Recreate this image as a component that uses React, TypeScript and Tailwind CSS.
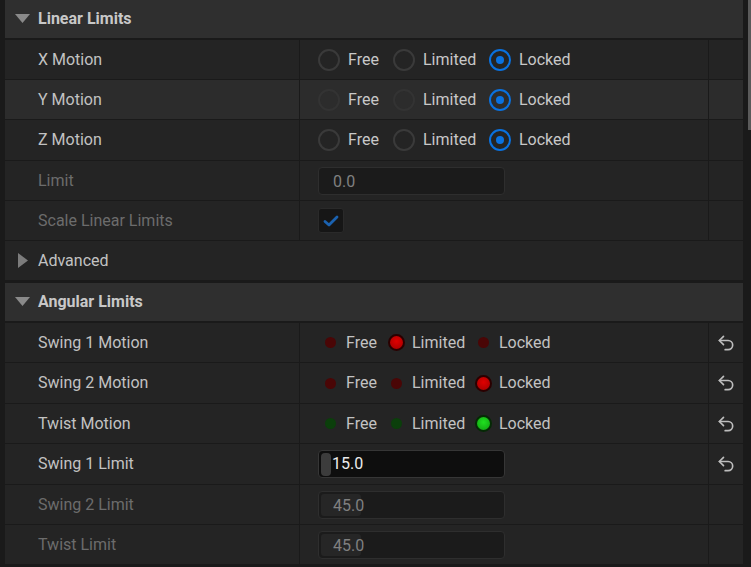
import React from "react";

const Undo = () => (
  <svg width="20" height="20" viewBox="0 0 24 24" fill="none" stroke="#bdbdbd" strokeWidth="2" strokeLinecap="round" strokeLinejoin="round">
    <path d="M9 14 4 9l5-5" />
    <path d="M4 9h10.5a5.5 5.5 0 0 1 5.5 5.5a5.5 5.5 0 0 1-5.5 5.5H11" />
  </svg>
);

const DownTri = () => (
  <svg width="15" height="9" viewBox="0 0 15 9"><path d="M0 0h15L7.5 9z" fill="#8a8a8a" /></svg>
);
const RightTri = () => (
  <svg width="10" height="15" viewBox="0 0 10 15"><path d="M0 0l10 7.5L0 15z" fill="#7c7c7c" /></svg>
);

function Row({
  label,
  dim,
  hl,
  tall,
  children,
  reset,
}: {
  label: string;
  dim?: boolean;
  hl?: boolean;
  tall?: boolean;
  children?: React.ReactNode;
  reset?: boolean;
}) {
  return (
    <div
      className={`flex ${tall ? "h-[41px]" : "h-[40px]"} border-b border-[#1a1a1a] ${hl ? "bg-[#2c2c2c]" : "bg-[#242424]"}`}
    >
      <div
        className={`w-[295px] shrink-0 border-r border-[#1a1a1a] pl-[33px] flex items-center text-[16px] ${dim ? "text-[#6c6c6c]" : "text-[#c2c2c2]"}`}
      >
        {label}
      </div>
      <div className="w-[409px] shrink-0 border-r border-[#1a1a1a] flex items-center pl-[18px]">{children}</div>
      <div className="w-[34px] shrink-0 flex items-center justify-center">{reset ? <Undo /> : null}</div>
    </div>
  );
}

function Header({ label }: { label: string }) {
  return (
    <div className="flex items-center h-[40px] border-b-2 border-[#1a1a1a] bg-[#2f2f2f]">
      <div className="w-[33px] flex justify-center pl-[2px] pb-[1px]">
        <DownTri />
      </div>
      <span className="text-[16px] font-bold text-[#c8c8c8]">{label}</span>
    </div>
  );
}

function Radio({ on, dim }: { on?: boolean; dim?: boolean }) {
  if (on)
    return (
      <div className="w-[22px] h-[22px] rounded-full border-2 border-[#0a72e0] flex items-center justify-center">
        <div className="w-[8px] h-[8px] rounded-full bg-[#0a72e0]" />
      </div>
    );
  return <div className={`w-[22px] h-[22px] rounded-full border-2 ${dim ? "border-[#333333]" : "border-[#3a3a3a]"}`} />;
}

function Motion({ hl }: { hl?: boolean }) {
  return (
    <div className="flex items-center text-[16px] text-[#c8c8c8]">
      <div className="w-[75px] flex items-center gap-[8px]">
        <Radio dim={hl} />
        <span>Free</span>
      </div>
      <div className="w-[96px] flex items-center gap-[8px]">
        <Radio dim={hl} />
        <span>Limited</span>
      </div>
      <div className="flex items-center gap-[8px]">
        <Radio on />
        <span>Locked</span>
      </div>
    </div>
  );
}

function Dot({ color, big }: { color: "r" | "g"; big?: boolean }) {
  if (big) {
    return (
      <div className="w-[22px] h-[22px] flex items-center justify-center">
        <div
          className={`w-[17px] h-[17px] rounded-full border-2 ${
            color === "r"
              ? "border-[#2a0000] bg-[radial-gradient(circle_at_50%_40%,#e00000,#a00000)]"
              : "border-[#052a05] bg-[radial-gradient(circle_at_50%_40%,#20e020,#10a010)]"
          }`}
        />
      </div>
    );
  }
  return (
    <div className="w-[22px] h-[22px] flex items-center justify-center">
      <div className={`w-[11px] h-[11px] rounded-full ${color === "r" ? "bg-[#4a0606]" : "bg-[#0b3f0b]"}`} />
    </div>
  );
}

function ColorMotion({ color, sel }: { color: "r" | "g"; sel: number }) {
  return (
    <div className="flex items-center text-[16px] text-[#c2c2c2] ml-[1px]">
      <div className="w-[66px] flex items-center gap-[5px]">
        <Dot color={color} big={sel === 0} />
        <span>Free</span>
      </div>
      <div className="w-[87px] flex items-center gap-[5px]">
        <Dot color={color} big={sel === 1} />
        <span>Limited</span>
      </div>
      <div className="flex items-center gap-[5px]">
        <Dot color={color} big={sel === 2} />
        <span>Locked</span>
      </div>
    </div>
  );
}

function NumInput({ value, fill, active }: { value: string; fill?: boolean; active?: boolean }) {
  if (active)
    return (
      <div className="w-[187px] h-[28px] rounded-[4px] border border-[#363636] bg-[#0e0e0e] flex items-center pl-[2px]">
        <div className="w-[10px] h-[23px] rounded-[4px] bg-[#3c3c3c]" />
        <span className="text-[16px] text-[#ececec] ml-[1px]">{value}</span>
      </div>
    );
  return (
    <div className="w-[187px] h-[28px] rounded-[4px] border border-[#2e2e2e] bg-[#1b1b1b] flex items-center p-[2px] relative">
      {fill ? <div className="w-[40px] h-full rounded-[3px] bg-[#262626]" /> : null}
      <span className="absolute left-[14px] top-[2px] text-[16px] text-[#808080]">{value}</span>
    </div>
  );
}

export default function App() {
  return (
    <div
      className="w-[751px] h-[567px] bg-[#1a1a1a] flex overflow-hidden"
      style={{ fontFamily: "Roboto, 'Noto Sans', sans-serif" }}
    >
      <div className="w-[5px] shrink-0" />
      <div className="w-[738px] shrink-0 flex flex-col">
        <Header label="Linear Limits" />
        <Row label="X Motion">
          <Motion />
        </Row>
        <Row label="Y Motion" hl>
          <Motion hl />
        </Row>
        <Row label="Z Motion" tall>
          <Motion />
        </Row>
        <Row label="Limit" dim>
          <NumInput value="0.0" />
        </Row>
        <Row label="Scale Linear Limits" dim>
          <div className="w-[26px] h-[25px] rounded-[3px] border border-[#2a2a2a] bg-[#161616] flex items-center justify-center">
            <svg width="16" height="12" viewBox="0 0 16 12" fill="none">
              <path d="M2 6.5 6 10l8-8" stroke="#1b62b0" strokeWidth="2.8" strokeLinecap="round" strokeLinejoin="round" />
            </svg>
          </div>
        </Row>
        <div className="flex items-center h-[42px] border-b-[3px] border-[#1a1a1a] bg-[#242424]">
          <div className="w-[33px] flex justify-center pl-[2px]">
            <RightTri />
          </div>
          <span className="text-[16px] text-[#c2c2c2]">Advanced</span>
        </div>
        <Header label="Angular Limits" />
        <Row label="Swing 1 Motion" reset>
          <ColorMotion color="r" sel={1} />
        </Row>
        <Row label="Swing 2 Motion" reset tall>
          <ColorMotion color="r" sel={2} />
        </Row>
        <Row label="Twist Motion" reset>
          <ColorMotion color="g" sel={2} />
        </Row>
        <Row label="Swing 1 Limit" reset tall>
          <NumInput value="15.0" active />
        </Row>
        <Row label="Swing 2 Limit" dim>
          <NumInput value="45.0" fill />
        </Row>
        <Row label="Twist Limit" dim>
          <NumInput value="45.0" fill />
        </Row>
      </div>
      <div className="w-[5px] shrink-0" />
      <div className="w-[3px] shrink-0 flex flex-col">
        <div className="h-[130px] bg-[#5a5a5a]" />
      </div>
    </div>
  );
}
